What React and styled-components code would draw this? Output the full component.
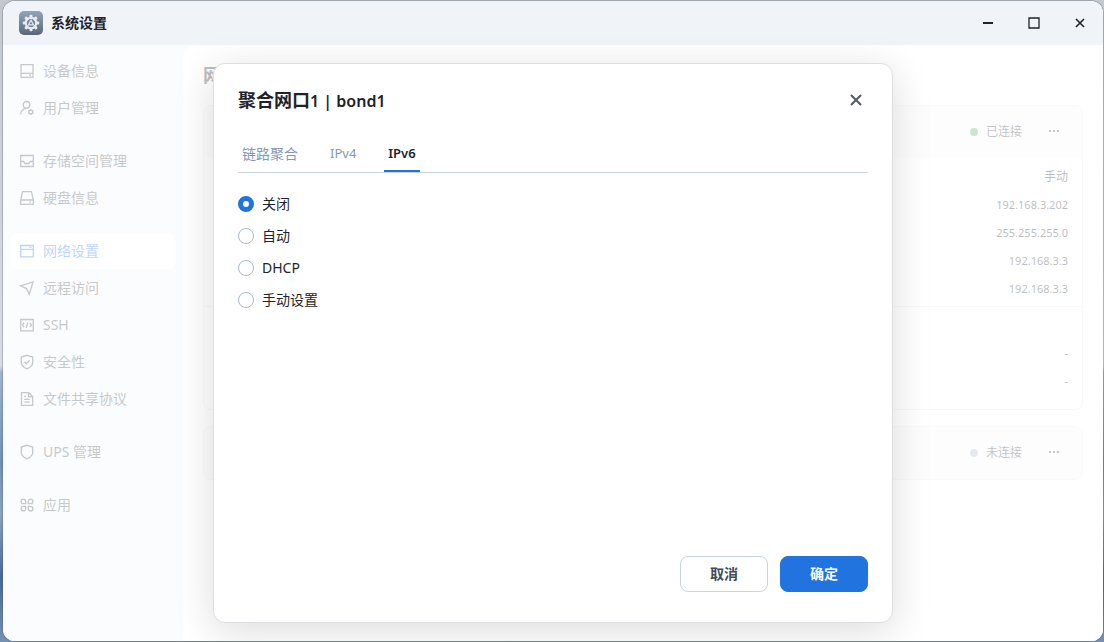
import React, { useState } from 'react'
import styled, { createGlobalStyle, css } from 'styled-components'

const GlobalStyle = createGlobalStyle`
    * {
        box-sizing: border-box;
    }

    body {
        margin: 0;
        font-family: 'Noto Sans', 'Noto Sans CJK SC', sans-serif;
        font-size: 14px;
        line-height: 20px;
        color: #1f2329;
    }

    button {
        font-family: inherit;
        cursor: pointer;
    }
`

const icons = {
    device: (
        <>
            <path d="M2 1.7h12v12.6H2zM2 10.3h12" />
            <path d="M10 12.3h2" />
        </>
    ),
    user: (
        <>
            <circle cx="7.5" cy="4.8" r="3.3" />
            <path d="M1.7 14.5c0-3 1.8-5.3 5-6.2" />
            <circle cx="11.8" cy="12" r="1.9" />
            <path d="M11.8 9v1.2M11.8 13.8v1.2M9.2 10.5l1 .6M13.4 12.9l1 .6M9.2 13.5l1-.6M13.4 11.1l1-.6" />
        </>
    ),
    storage: <path d="M1.7 2.5h12.6v11H1.7zM1.7 8.5h3l1.3 2h4l1.3-2h3" />,
    disk: (
        <>
            <path d="M3.5 1.7h9l1.8 8.3v4.3H1.7V10zM1.7 10h12.6" />
            <path d="M10.5 12.2h1.5" />
        </>
    ),
    network: (
        <>
            <path d="M1.7 2.5h12.6v11.3H1.7zM1.7 6.3h12.6" />
            <path d="M10.5 4.4h2" />
        </>
    ),
    remote: <path d="M1.5 5.8L14 2l-3.7 12.3L7.5 8.6z" />,
    ssh: (
        <>
            <path d="M1.7 2.5h12.6v11.3H1.7z" />
            <path d="M5.2 6L3.5 8.1l1.7 2.1M10.8 6l1.7 2.1-1.7 2.1M8.8 5.5l-1.6 5.2" />
        </>
    ),
    security: (
        <>
            <path d="M8 1.3l5.7 1.8v5.4c0 3-2.7 5-5.7 6.3-3-1.3-5.7-3.3-5.7-6.3V3.1z" />
            <path d="M5.3 7.7l2 2 3.5-3.5" />
        </>
    ),
    file: (
        <>
            <path d="M2.5 1.7h7.2l3.9 3.8v8.8H2.5z" />
            <path d="M9.5 1.7v4h4M5.2 8.3h5.6M5.2 11.2h5.6M5.2 5.4H7" />
        </>
    ),
    ups: <path d="M8 1.3l5.7 1.8v5.4c0 3-2.7 5-5.7 6.3-3-1.3-5.7-3.3-5.7-6.3V3.1z" />,
    apps: (
        <path d="M6.7 6.7H4.3a2.3 2.3 0 1 1 2.4-2.4zM9.3 6.7V4.3a2.3 2.3 0 1 1 2.4 2.4zM6.7 9.3v2.4a2.3 2.3 0 1 1-2.4-2.4zM9.3 9.3h2.4a2.3 2.3 0 1 1-2.4 2.4z" />
    ),
}

const menu = [
    [
        { icon: 'device', label: '设备信息' },
        { icon: 'user', label: '用户管理' },
    ],
    [
        { icon: 'storage', label: '存储空间管理' },
        { icon: 'disk', label: '硬盘信息' },
    ],
    [
        { icon: 'network', label: '网络设置', active: true },
        { icon: 'remote', label: '远程访问' },
        { icon: 'ssh', label: 'SSH' },
        { icon: 'security', label: '安全性' },
        { icon: 'file', label: '文件共享协议' },
    ],
    [{ icon: 'ups', label: 'UPS 管理' }],
    [{ icon: 'apps', label: '应用' }],
]

const addresses = ['192.168.3.202', '255.255.255.0', '192.168.3.3', '192.168.3.3']
const ipv6 = ['-', '-']

const tabs = [{ name: '链路聚合' }, { name: 'IPv4', latin: true }, { name: 'IPv6', latin: true }]
const modes = ['关闭', '自动', 'DHCP', '手动设置']

const teeth = [0, 45, 90, 135, 180, 225, 270, 315]

function AppLogo() {
    return (
        <Logo viewBox="0 0 24 24" aria-hidden="true">
            <defs>
                <linearGradient id="logoBg" x1="0" y1="0" x2="0" y2="1">
                    <stop offset="0" stopColor="#93a3ba" />
                    <stop offset="1" stopColor="#5b6778" />
                </linearGradient>
            </defs>
            <rect width="24" height="24" rx="5" fill="url(#logoBg)" />
            <g fill="#e8ebef">
                {teeth.map(angle => (
                    <rect key={angle} x="10.5" y="3.8" width="3" height="4" rx="1" transform={`rotate(${angle} 12 12)`} />
                ))}
            </g>
            <circle cx="12" cy="12" r="5.3" fill="none" stroke="#e8ebef" strokeWidth="2" />
            <path d="M12 9.2l2.6 4.7H9.4z" fill="none" stroke="#e8ebef" strokeWidth="1.2" />
        </Logo>
    )
}

function Dots() {
    return (
        <svg width="12" height="4" fill="currentColor">
            <path d="M1 0h2v2H1zM5 0h2v2H5zM9 0h2v2H9z" />
        </svg>
    )
}

export default function App() {
    const [tab, setTab] = useState('IPv6')
    const [mode, setMode] = useState('关闭')
    const [open, setOpen] = useState(true)

    return (
        <Desktop>
            <GlobalStyle />
            <Window>
                <TitleBar>
                    <AppLogo />
                    <AppName>系统设置</AppName>
                    <WindowButton aria-label="最小化">
                        <svg width="12" height="12" stroke="currentColor" strokeWidth="2">
                            <path d="M1 6h10" />
                        </svg>
                    </WindowButton>
                    <WindowButton aria-label="最大化">
                        <svg width="12" height="12" fill="none" stroke="currentColor" strokeWidth="1.3">
                            <path d="M1 1h10v10H1z" />
                        </svg>
                    </WindowButton>
                    <WindowButton aria-label="关闭窗口">
                        <svg width="12" height="12" stroke="currentColor" strokeWidth="1.6">
                            <path d="M2 2l8 8M10 2l-8 8" />
                        </svg>
                    </WindowButton>
                </TitleBar>

                <Body>
                    <Sidebar>
                        {menu.map((group, i) => (
                            <MenuGroup key={i}>
                                {group.map(item => (
                                    <MenuItem key={item.label} href="#" $active={item.active}>
                                        <MenuIcon viewBox="0 0 16 16">{icons[item.icon]}</MenuIcon>
                                        {item.label}
                                    </MenuItem>
                                ))}
                            </MenuGroup>
                        ))}
                    </Sidebar>

                    <Content>
                        <PageTitle>网络设置</PageTitle>
                        <Card>
                            <CardHeader>
                                <Dot $on />
                                已连接
                                <MoreButton aria-label="更多">
                                    <Dots />
                                </MoreButton>
                            </CardHeader>
                            <Values>
                                <Value $large>手动</Value>
                                {addresses.map((value, i) => (
                                    <Value key={i}>{value}</Value>
                                ))}
                            </Values>
                            <Values $divided>
                                {ipv6.map((value, i) => (
                                    <Value key={i}>{value}</Value>
                                ))}
                            </Values>
                        </Card>
                        <Card>
                            <CardHeader>
                                <Dot />
                                未连接
                                <MoreButton aria-label="更多">
                                    <Dots />
                                </MoreButton>
                            </CardHeader>
                        </Card>
                    </Content>

                    {open && (
                        <Mask>
                            <Modal role="dialog" aria-labelledby="modalTitle">
                                <ModalHeader>
                                    <ModalTitle id="modalTitle">
                                        聚合网口<PortName>1 | bond1</PortName>
                                    </ModalTitle>
                                    <CloseButton aria-label="关闭对话框" onClick={() => setOpen(false)}>
                                        <svg width="12" height="12" stroke="currentColor" strokeWidth="2">
                                            <path d="M1 1l10 10M11 1L1 11" />
                                        </svg>
                                    </CloseButton>
                                </ModalHeader>
                                <Tabs role="tablist">
                                    {tabs.map(({ name, latin }) => (
                                        <Tab
                                            key={name}
                                            role="tab"
                                            aria-selected={tab === name}
                                            $active={tab === name}
                                            $latin={latin}
                                            onClick={() => setTab(name)}
                                        >
                                            {name}
                                        </Tab>
                                    ))}
                                </Tabs>
                                <Options>
                                    {modes.map(name => (
                                        <Option key={name}>
                                            <Radio
                                                type="radio"
                                                name="mode"
                                                checked={mode === name}
                                                onChange={() => setMode(name)}
                                            />
                                            {name}
                                        </Option>
                                    ))}
                                </Options>
                                <ModalFooter>
                                    <Button onClick={() => setOpen(false)}>取消</Button>
                                    <Button $primary onClick={() => setOpen(false)}>
                                        确定
                                    </Button>
                                </ModalFooter>
                            </Modal>
                        </Mask>
                    )}
                </Body>
            </Window>
        </Desktop>
    )
}

const Desktop = styled.div`
    display: flex;
    min-height: 100vh;
    padding: 1px 1px 1px 3px;
    background: linear-gradient(#c3c7ce 0%, #d9dbe2 57%, #9fb3cf 58%, #6f8fbb 72%, #8aa2c0 80%, #45679a 90%, #7590b3 100%);
`

const Window = styled.div`
    flex: 1;
    display: flex;
    flex-direction: column;
    border-radius: 12px;
    overflow: hidden;
    background: #fff;
    box-shadow: 0 0 0 1px rgba(80, 90, 100, 0.3);
`

const TitleBar = styled.header`
    display: flex;
    align-items: center;
    height: 44px;
    padding-left: 16px;
    background: #f0f3f8;
`

const Logo = styled.svg`
    width: 24px;
    height: 24px;
`

const AppName = styled.h1`
    flex: 1;
    margin: 0 0 0 8px;
    font-size: 14px;
    font-weight: 700;
`

const WindowButton = styled.button`
    display: flex;
    align-items: center;
    justify-content: center;
    width: 46px;
    height: 44px;
    padding: 0;
    border: none;
    background: none;
    color: #1f2329;
`

const Body = styled.div`
    position: relative;
    flex: 1;
    display: flex;
    background: #f0f3f8;
`

const Sidebar = styled.nav`
    display: flex;
    flex-direction: column;
    gap: 17px;
    width: 180px;
    padding: 8px;
`

const MenuGroup = styled.div`
    display: flex;
    flex-direction: column;
    gap: 1px;
`

const MenuItem = styled.a`
    display: flex;
    align-items: center;
    gap: 8px;
    height: 36px;
    padding: 0 8px;
    border-radius: 6px;
    color: #43464b;
    text-decoration: none;

    ${({ $active }) =>
        $active &&
        css`
            background: #fff;
            color: #2173df;
        `}
`

const MenuIcon = styled.svg`
    width: 16px;
    height: 16px;
    fill: none;
    stroke: currentColor;
    stroke-width: 1.3;
`

const Content = styled.main`
    flex: 1;
    display: flex;
    flex-direction: column;
    gap: 16px;
    padding: 20px;
    border-top-left-radius: 12px;
    background: #fff;
`

const PageTitle = styled.h2`
    margin: 0;
    height: 24px;
    font-size: 18px;
    line-height: 20px;
    font-weight: 600;
`

const Card = styled.section`
    border: 1px solid #e9ebf3;
    border-radius: 8px;
    overflow: hidden;
`

const CardHeader = styled.div`
    display: flex;
    align-items: center;
    justify-content: flex-end;
    height: 52px;
    padding-right: 14px;
    background: #f9f9fa;
    font-size: 12px;
    color: #33363b;
`

const Dot = styled.span`
    width: 8px;
    height: 8px;
    margin-right: 8px;
    border-radius: 50%;
    background: ${({ $on }) => ($on ? '#52b35a' : '#aab6c8')};
`

const MoreButton = styled.button`
    display: flex;
    align-items: center;
    justify-content: center;
    width: 28px;
    height: 28px;
    margin-left: 18px;
    padding: 0;
    border: none;
    background: none;
    color: #3a4250;
`

const Values = styled.ul`
    margin: 0;
    padding: ${({ $divided }) => ($divided ? '32px 14px 14px' : '5px 14px 3px')};
    border-top: ${({ $divided }) => ($divided ? '1px solid #e9ebf3' : 'none')};
    list-style: none;
`

const Value = styled.li`
    height: 28px;
    font-size: ${({ $large }) => ($large ? 12 : 11)}px;
    line-height: 28px;
    text-align: right;
    color: #1f2329;
`

const Mask = styled.div`
    position: absolute;
    inset: 0;
    display: flex;
    align-items: center;
    justify-content: center;
    background: rgba(255, 255, 255, 0.7);
`

const Modal = styled.div`
    display: flex;
    flex-direction: column;
    width: 680px;
    min-height: 560px;
    padding: 24px;
    border: 1px solid #dddfe2;
    border-radius: 12px;
    background: #fff;
    box-shadow: 0 8px 40px rgba(0, 0, 0, 0.14);
`

const ModalHeader = styled.div`
    display: flex;
    align-items: center;
    justify-content: space-between;
    height: 24px;
`

const ModalTitle = styled.h2`
    margin: 0;
    font-size: 18px;
    line-height: 24px;
    font-weight: 600;
`

const PortName = styled.span`
    font-size: 16px;
`

const CloseButton = styled.button`
    display: flex;
    align-items: center;
    justify-content: center;
    width: 24px;
    height: 24px;
    padding: 0;
    border: none;
    background: none;
    color: #4e5969;
`

const Tabs = styled.div`
    display: flex;
    gap: 24px;
    margin-top: 24px;
    border-bottom: 1px solid #c9d4e2;
`

const Tab = styled.button`
    height: 36px;
    padding: 0 4px;
    border: none;
    border-bottom: 2px solid ${({ $active }) => ($active ? '#2173df' : 'transparent')};
    background: none;
    font-size: ${({ $latin }) => ($latin ? 13 : 14)}px;
    font-weight: ${({ $active }) => ($active ? 600 : 400)};
    color: ${({ $active }) => ($active ? '#1f2329' : '#8598b3')};
`

const Options = styled.div`
    flex: 1;
    display: flex;
    flex-direction: column;
    gap: 12px;
    margin-top: 21px;
`

const Option = styled.label`
    display: flex;
    align-items: center;
    gap: 8px;
`

const Radio = styled.input`
    appearance: none;
    width: 16px;
    height: 16px;
    margin: 0;
    border: 1px solid #a9b7cc;
    border-radius: 50%;

    &:checked {
        border: 5px solid #2173df;
    }
`

const ModalFooter = styled.div`
    display: flex;
    justify-content: flex-end;
    gap: 12px;
    padding-bottom: 6px;
`

const Button = styled.button`
    width: 88px;
    height: 36px;
    padding: 0 0 2px;
    border: 1px solid ${({ $primary }) => ($primary ? '#2173df' : '#c9d4e2')};
    border-radius: 8px;
    background: ${({ $primary }) => ($primary ? '#2173df' : '#fff')};
    color: ${({ $primary }) => ($primary ? '#fff' : '#434a58')};
    font-size: 14px;
    font-weight: 700;
`
